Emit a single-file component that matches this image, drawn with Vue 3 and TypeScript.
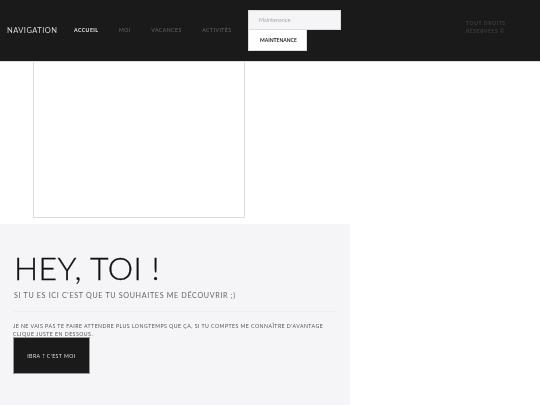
<script setup lang="ts">
const links: string[] = ['Accueil', 'Moi', 'Vacances', 'Activités']
</script>

<template>
  <div class="page">
    <header class="bar">
      <span class="brand">NAVIGATION</span>
      <nav class="menu">
        <a v-for="(l, i) in links" :key="l" class="link" :class="{ active: i === 0 }">{{ l }}</a>
        <div class="drop">
          <div class="drop-head">Maintenance</div>
          <div class="drop-item">Maintenance</div>
        </div>
      </nav>
      <span class="rights">Tout droits<br />réservées ©</span>
    </header>
    <div class="frame-wrap"><div class="frame"></div></div>
    <section class="hero">
      <h1>HEY, TOI !</h1>
      <p class="lead">SI TU ES ICI C'EST QUE TU SOUHAITES ME DÉCOUVRIR ;)</p>
      <hr />
      <p class="body">JE NE VAIS PAS TE FAIRE ATTENDRE PLUS LONGTEMPS QUE ÇA, SI TU COMPTES ME CONNAÎTRE D'AVANTAGE CLIQUE JUSTE EN DESSOUS.</p>
      <a class="btn">IBRA ? C'EST MOI</a>
    </section>
  </div>
</template>

<style>
html, body { margin: 0; background: #fff; overflow: hidden; }
</style>

<style scoped>
.page { width: 540px; height: 405px; overflow: hidden; font-family: Lato, "Noto Sans", sans-serif; will-change: transform; }
.bar { height: 62px; box-sizing: border-box; background: #1a1a1a; border-bottom: 1px solid #ddd; display: flex; align-items: center; position: relative; }
.brand { margin-left: 7px; width: 67px; color: #d8d8d8; font-size: 7.5px; letter-spacing: 0.45px; }
.menu { display: flex; align-items: center; margin-top: -1px; }
.link { text-transform: uppercase; font-size: 5.2px; letter-spacing: 0.45px; color: #666; margin-right: 20.5px; }
.link.active { color: #e4e4e4; font-weight: 700; }
.drop { position: absolute; left: 248px; top: 10px; width: 93px; }
.drop-head { height: 20px; box-sizing: border-box; background: #f5f5f8; border: 1px solid #ddd; color: #aaa; font-size: 5.5px; line-height: 18px; padding-left: 10px; }
.drop-item { height: 21px; width: 59px; box-sizing: border-box; background: #fff; border: 1px solid #ddd; border-top: 0; color: #222; font-size: 5px; line-height: 20px; padding-left: 11px; text-transform: uppercase; font-weight: 700; }
.rights { position: absolute; left: 466px; top: 19px; color: #3c3c3c; font-size: 5.2px; line-height: 8px; letter-spacing: 0.5px; text-transform: uppercase; font-weight: 700; }
.frame-wrap { height: 162px; padding-left: 33px; }
.frame { width: 212px; height: 156px; box-sizing: border-box; border: 1px solid #ddd; border-top: 0; }
.hero { width: 350px; height: 181px; box-sizing: border-box; background: #f5f5f8; padding: 26px 13px 0 13px; }
h1 { margin: 0 0 0 1px; font-size: 32px; font-weight: 300; color: #111; line-height: 36px; letter-spacing: 0.45px; -webkit-text-stroke: 0.3px #111; }
.lead { margin: 4px 0 0 1px; font-size: 7.2px; line-height: 12px; color: #666; letter-spacing: 0.65px; }
hr { border: 0; border-top: 1px solid #eeeef0; margin: 9px 0 10px; }
.body { margin: 0 0 -1px; font-size: 5.2px; line-height: 8px; color: #555; letter-spacing: 0.47px; }
.btn { display: flex; align-items: center; justify-content: center; width: 77px; height: 37px; box-sizing: border-box; background: #1a1a1a; border: 1px solid #999; color: #ddd; font-size: 5.2px; letter-spacing: 0.45px; }
</style>
